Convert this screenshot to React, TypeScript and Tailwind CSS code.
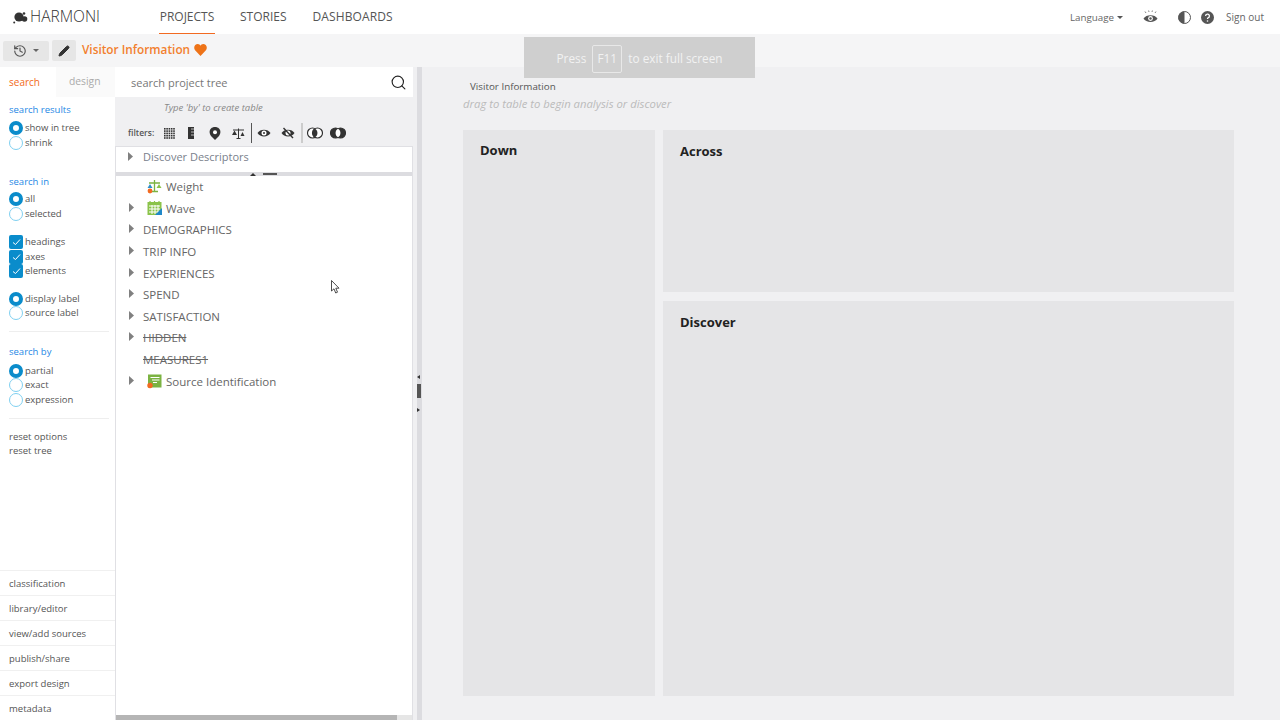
import { History, Pencil, Search } from 'lucide-react';
import type { ReactNode } from 'react';

const Radio = ({ label, checked }: { label: string; checked?: boolean }) => (
  <div className="flex h-[14.5px] items-center gap-[2px] text-[9.5px] text-[#555]">
    <span
      className={
        checked
          ? 'size-[14px] rounded-full border-[4px] border-[#0a8ccb] bg-white'
          : 'size-[14px] rounded-full border border-[#7fd0f0] bg-white'
      }
    />
    <span>{label}</span>
  </div>
);

const Check = ({ label }: { label: string }) => (
  <div className="flex h-[14.5px] items-center gap-[2px] text-[9.5px] text-[#555]">
    <span className="flex size-[14px] items-center justify-center rounded-[2px] bg-[#0a8ccb]">
      <svg width="9" height="8" viewBox="0 0 9 8" fill="none" stroke="#fff" strokeWidth="1">
        <path d="M1 4.5 L3.5 6.5 L8 1.5" />
      </svg>
    </span>
    <span>{label}</span>
  </div>
);

const Caret = () => (
  <svg width="5" height="9" viewBox="0 0 5 9" className="-mt-[2px] shrink-0">
    <path d="M0 0 L5 4.5 L0 9 Z" fill="#808080" />
  </svg>
);

const WeightIcon = () => (
  <svg width="15" height="15" viewBox="0 0 15 15">
    <path d="M7.5 1 V12 M2 4 H13 M5 12.5 H11" stroke="#7cb342" strokeWidth="1.3" fill="none" />
    <path d="M3 5 L0.5 9 H5.5 Z" fill="#2e8fc9" />
    <path d="M12 5 L9.5 9 H14.5 Z" fill="#8bc34a" />
    <circle cx="3" cy="12" r="2.4" fill="#f26a21" />
  </svg>
);

const WaveIcon = () => (
  <svg width="15" height="14" viewBox="0 0 15 14">
    <rect x="0.5" y="1" width="14" height="13" fill="#8bc34a" />
    <path d="M3 0 V2 M7.5 0 V2 M12 0 V2" stroke="#8bc34a" strokeWidth="1.2" />
    <path d="M2 5 H13 M2 8 H13 M2 11 H13 M5 4 V13 M8 4 V13 M11 4 V13" stroke="#fff" strokeWidth="1" />
    <path d="M8 14 L15 7 V14 Z" fill="#1f88c9" />
  </svg>
);

const SourceIcon = () => (
  <svg width="15" height="15" viewBox="0 0 15 15">
    <rect x="1" y="0.5" width="13.5" height="13" fill="#7cb342" />
    <path d="M3.5 3.5 H12.5 M5 6 H12.5 M6 8.5 H10" stroke="#fff" strokeWidth="1.2" />
    <circle cx="3" cy="11.5" r="2.7" fill="#f26a21" />
  </svg>
);

const Row = ({ label, caret, icon, struck }: { label: string; caret?: boolean; icon?: ReactNode; struck?: boolean }) => (
  <div className="flex h-[21.6px] items-center text-[11.5px] text-[#666]">
    <span className="flex w-[27px] justify-end pr-[9px]">{caret && <Caret />}</span>
    {icon && <span className="mx-[4px] flex w-[15px] items-center">{icon}</span>}
    <span className={struck ? 'line-through' : ''}>{label}</span>
  </div>
);

const VennIcon = ({ filled }: { filled?: boolean }) => (
  <svg width="16" height="12" viewBox="0 0 16 12">
    <circle cx="5.5" cy="6" r="5" fill={filled ? '#333' : '#fff'} stroke="#333" strokeWidth="1.2" />
    <circle cx="10.5" cy="6" r="5" fill={filled ? '#333' : '#fff'} stroke="#333" strokeWidth="1.2" />
    <path d="M8 1.7 A5 5 0 0 1 8 10.3 A5 5 0 0 1 8 1.7" fill={filled ? '#fff' : '#333'} />
  </svg>
);

const EyeIcon = ({ slashed, className }: { slashed?: boolean; className: string }) => (
  <svg width="14" height="12" viewBox="0 0 14 12" className={className}>
    <path d="M0.5 6 C3 1.5 11 1.5 13.5 6 C11 10.5 3 10.5 0.5 6 Z" fill="#333" />
    <circle cx="7" cy="6" r="2.5" fill="#fff" />
    {slashed ? <path d="M2.5 1 L12 11" stroke="#333" strokeWidth="1.4" /> : <circle cx="7" cy="6" r="1" fill="#333" />}
  </svg>
);

const gridDots = [0, 1, 2, 3, 4];

const GridIcon = () => (
  <svg width="11" height="11" viewBox="0 0 11 11" className="mr-[13px]">
    {gridDots.map((y) =>
      gridDots.map((x) => <rect key={`${x}-${y}`} x={x * 2.3} y={y * 2.3} width="1.6" height="1.6" fill="#333" />),
    )}
  </svg>
);

const footerLinks = ['classification', 'library/editor', 'view/add sources', 'publish/share', 'export design', 'metadata'];

const Sidebar = () => (
  <aside className="flex w-[115px] shrink-0 flex-col bg-white">
    <div className="flex h-[30px] items-center text-[10px]">
      <span className="flex h-full w-[56px] items-center pl-[9px] text-[#f26a21]">search</span>
      <span className="flex h-full flex-1 items-center bg-[#fafafa] pl-[13px] text-[10.3px] text-[#aaa]">design</span>
    </div>
    <div className="px-[9px] pt-[6px]">
      <div className="mb-[4px] h-[14px] text-[9.5px] leading-[14px] text-[#1e88e5]">search results</div>
      <Radio label="show in tree" checked />
      <Radio label="shrink" />
      <div className="mt-[25px] mb-[3px] h-[14px] text-[9.5px] leading-[14px] text-[#1e88e5]">search in</div>
      <Radio label="all" checked />
      <Radio label="selected" />
      <div className="h-[14px]" />
      <Check label="headings" />
      <Check label="axes" />
      <Check label="elements" />
      <div className="h-[13px]" />
      <Radio label="display label" checked />
      <Radio label="source label" />
      <div className="mt-[10px] mr-[-3px] mb-[13px] border-t border-[#eee]" />
      <div className="mb-[5px] h-[14px] text-[9.5px] leading-[14px] text-[#1e88e5]">search by</div>
      <Radio label="partial" checked />
      <Radio label="exact" />
      <Radio label="expression" />
      <div className="my-[11px] mr-[-3px] border-t border-[#eee]" />
      <div className="text-[9.5px] leading-[14px] text-[#555]">reset options</div>
      <div className="text-[9.5px] leading-[14px] text-[#555]">reset tree</div>
    </div>
    <div className="mt-auto">
      {footerLinks.map((link) => (
        <div key={link} className="flex h-[25px] items-center border-t border-[#f0f0f0] pt-[2px] pl-[9px] text-[9.5px] text-[#555]">
          {link}
        </div>
      ))}
    </div>
  </aside>
);

const TreePanel = () => (
  <section className="flex w-[298px] shrink-0 flex-col">
    <div className="flex h-[30px] items-center justify-between bg-white pr-[6px] pl-[16px] text-[11px] text-[#777]">
      <span className="pt-[2px]">search project tree</span>
      <Search size={17} color="#222" strokeWidth={1.6} />
    </div>
    <div className="h-[23px] pl-[49px] text-[9.5px] leading-[22px] text-[#888] italic">Type 'by' to create table</div>
    <div className="flex h-[26px] items-center pl-[13px]">
      <span className="mr-[10px] text-[8.5px] font-semibold text-[#555]">filters:</span>
      <GridIcon />
      <svg width="6" height="12" viewBox="0 0 6 12" className="mr-[15px]">
        <rect width="6" height="12" fill="#333" />
        <path d="M3 2 H6 M3 5 H6 M3 8 H6" stroke="#ccc" strokeWidth="0.9" />
      </svg>
      <svg width="12" height="13" viewBox="0 0 12 13" className="mr-[11px]">
        <path d="M6 13 L2 9 C-1 5 1 0 6 0 C11 0 13 5 10 9 Z" fill="#333" />
        <circle cx="6" cy="5.2" r="2" fill="#fff" />
      </svg>
      <svg width="13" height="11" viewBox="0 0 13 11" className="mr-[6px]">
        <path d="M1 2 H12 M6.5 0.5 V10.5 M4.5 10.5 H8.5" stroke="#333" strokeWidth="1" />
        <path d="M2.5 2.5 L0 7 H5 Z M10.5 4 L8.5 8 H12.5 Z" fill="#333" />
      </svg>
      <span className="mr-[5px] h-[20px] w-px bg-[#555]" />
      <EyeIcon className="mr-[10px]" />
      <EyeIcon slashed className="mr-[6px]" />
      <span className="mr-[4px] h-[20px] w-[2px] bg-[#ccc]" />
      <span className="mr-[7px] flex"><VennIcon /></span>
      <VennIcon filled />
    </div>
    <div className="flex flex-1 flex-col overflow-hidden border-x border-t border-[#e0e0e4] bg-white">
      <div className="flex h-[25px] shrink-0 items-center pb-[5px] pl-[12px] text-[11px] text-[#7a7f8c]">
        <Caret />
        <span className="ml-[10px]">Discover Descriptors</span>
      </div>
      <div className="flex h-[4px] shrink-0 items-start justify-center gap-[7px] bg-[#dcdce0] pr-[1px]">
        <span className="mt-[1px] size-0 border-x-[3px] border-b-[3px] border-x-transparent border-b-[#333]" />
        <span className="mt-[1px] h-[2px] w-[14px] bg-[#555]" />
      </div>
      <div className="flex-1">
        <Row label="Weight" icon={<WeightIcon />} />
        <Row label="Wave" caret icon={<WaveIcon />} />
        <Row label="DEMOGRAPHICS" caret />
        <Row label="TRIP INFO" caret />
        <Row label="EXPERIENCES" caret />
        <Row label="SPEND" caret />
        <Row label="SATISFACTION" caret />
        <Row label="HIDDEN" caret struck />
        <Row label="MEASURES1" struck />
        <Row label="Source Identification" caret icon={<SourceIcon />} />
      </div>
      <div className="flex h-[5px] shrink-0 bg-[#e6e6e6]">
        <span className="h-full w-[281px] bg-[#b5b5b5]" />
      </div>
    </div>
  </section>
);

const Splitter = () => (
  <div className="relative flex w-[9px] shrink-0 justify-end">
    <div className="h-full w-[5px] bg-[#dcdce0]" />
    <div className="absolute top-[308px] left-[3px] flex w-[5px] flex-col items-center">
      <span className="size-0 border-y-[2.5px] border-r-[3px] border-y-transparent border-r-[#333]" />
      <span className="mt-[5px] mb-[5px] h-[14px] w-[4px] bg-[#555]" />
      <span className="mt-[5px] size-0 border-y-[2.5px] border-l-[3px] border-y-transparent border-l-[#333]" />
    </div>
  </div>
);

const DropPanel = ({ title, className }: { title: string; className: string }) => (
  <div className={`bg-[#e5e5e7] px-[17px] text-[13px] font-bold text-[#222] ${className}`}>{title}</div>
);

const App = () => (
  <div
    className="relative flex h-[720px] w-[1280px] flex-col overflow-hidden bg-[#f0f0f2]"
    style={{ fontFamily: '"Open Sans", "Noto Sans", sans-serif' }}
  >
    <header className="flex h-[34px] shrink-0 items-center bg-white pr-[16px] pl-[13px]">
      <div className="flex w-[146px] items-center">
        <svg width="15" height="13" viewBox="0 0 15 13">
          <circle cx="6" cy="6" r="4.6" fill="#333" />
          <circle cx="11.5" cy="8" r="2.8" fill="#333" />
          <circle cx="11" cy="2.5" r="1.3" fill="#333" />
          <circle cx="1.2" cy="11.5" r="1" fill="#333" />
        </svg>
        <span className="ml-[2px] text-[15.5px] leading-none font-light text-[#333]">HARMONI</span>
      </div>
      <nav className="flex h-full items-center text-[12px] font-medium text-[#555]">
        <span className="flex h-full w-[56px] items-center justify-center border-b border-[#f26a21] pt-px">PROJECTS</span>
        <span className="ml-[25px]">STORIES</span>
        <span className="ml-[26px] tracking-[0.1px]">DASHBOARDS</span>
      </nav>
      <div className="ml-auto flex items-center text-[10px] text-[#666]">
        <span className="pt-[2px] text-[9.8px]">Language</span>
        <span className="ml-[3px] size-0 border-x-[3px] border-t-[3px] border-x-transparent border-t-[#555]" />
        <svg width="15" height="14" viewBox="0 0 15 14" className="ml-[20px]">
          <path d="M3 3 L2 1.5 M6 2 L5.6 0.5 M9 2 L9.4 0.5 M12 3 L13 1.5" stroke="#666" strokeWidth="0.8" />
          <path d="M0.5 8.5 C3 4 12 4 14.5 8.5 C12 13 3 13 0.5 8.5 Z" fill="#555" />
          <circle cx="7.5" cy="8.5" r="2.4" fill="#fff" />
          <circle cx="7.5" cy="8.5" r="1.2" fill="#555" />
        </svg>
        <svg width="13" height="13" viewBox="0 0 13 13" className="ml-[20px]">
          <circle cx="6.5" cy="6.5" r="6" fill="#fff" stroke="#555" />
          <path d="M6.5 0.5 A6 6 0 0 0 6.5 12.5 Z" fill="#555" />
        </svg>
        <svg width="13" height="13" viewBox="0 0 13 13" className="ml-[10px]">
          <circle cx="6.5" cy="6.5" r="6.5" fill="#555" />
          <path d="M4.6 5 A1.9 1.9 0 1 1 7 6.8 C6.6 7 6.5 7.2 6.5 8" stroke="#fff" strokeWidth="1.3" fill="none" />
          <circle cx="6.5" cy="10" r="0.8" fill="#fff" />
        </svg>
        <span className="ml-[12px]">Sign out</span>
      </div>
    </header>

    <div className="flex h-[33px] shrink-0 items-center bg-[#f5f5f6] pl-[3px]">
      <div className="flex h-[20px] w-[46px] items-center justify-center gap-[6px] rounded-[2px] bg-[#e6e6e6]">
        <History size={14} color="#555" />
        <span className="size-0 border-x-[3px] border-t-[3px] border-x-transparent border-t-[#666]" />
      </div>
      <div className="ml-[3px] flex h-[21px] w-[24px] items-center justify-center rounded-[2px] bg-[#e6e6e6]">
        <Pencil size={12} color="#333" fill="#333" />
      </div>
      <span className="ml-[6px] pb-[2px] text-[11.8px] font-semibold text-[#f2802e]">Visitor Information</span>
      <svg width="13" height="12" viewBox="0 0 24 22" className="mb-[2px] ml-[4px]">
        <path d="M12 22 L2 11.5 C-2 6 2 0 7 0 C9.5 0 11 1.5 12 3 C13 1.5 14.5 0 17 0 C22 0 26 6 22 11.5 Z" fill="#ee7318" />
      </svg>
    </div>

    <div className="flex min-h-0 flex-1">
      <Sidebar />
      <TreePanel />
      <Splitter />
      <main className="flex flex-1 flex-col pr-[46px] pb-[24px] pl-[41px]">
        <div className="pt-[12px] pl-[7px] text-[9.8px] leading-[15px] text-[#555]">Visitor Information</div>
        <div className="mt-[2px] text-[11.3px] leading-[15px] text-[#bbb] italic">drag to table to begin analysis or discover</div>
        <div className="mt-[19px] flex min-h-0 flex-1 gap-[8px]">
          <DropPanel title="Down" className="w-[192px] pt-[11px]" />
          <div className="flex flex-1 flex-col gap-[9px]">
            <DropPanel title="Across" className="h-[162px] pt-[12px]" />
            <DropPanel title="Discover" className="flex-1 pt-[12px]" />
          </div>
        </div>
      </main>
    </div>

    <div className="absolute top-[37px] left-[524px] flex h-[41px] w-[231px] items-center justify-center gap-[6px] bg-[#cfcfcf] pt-[2px] text-[11.8px] text-[#f2f2f2]">
      <span>Press</span>
      <span className="flex h-[28px] w-[30px] items-center justify-center rounded-[2px] border border-[#e8e8e8]">F11</span>
      <span>to exit full screen</span>
    </div>

    <svg width="9" height="14" viewBox="0 0 9 14" className="absolute top-[280px] left-[331px]">
      <path d="M0.5 0.5 V11 L3 8.8 L4.7 13 L6.5 12.2 L4.8 8.2 H8 Z" fill="#fff" stroke="#222" strokeWidth="0.8" />
    </svg>
  </div>
);

export default App;
